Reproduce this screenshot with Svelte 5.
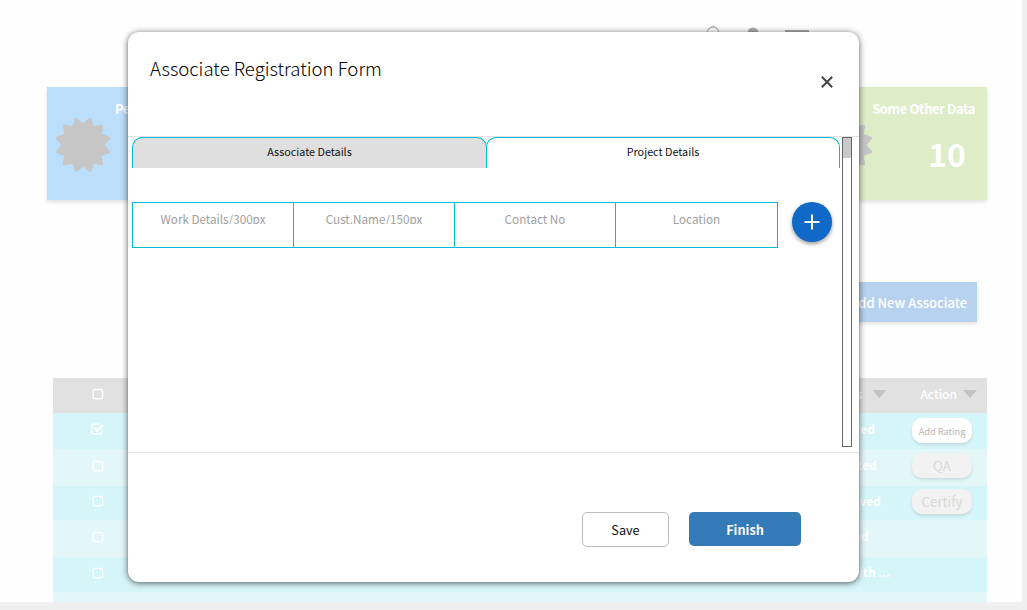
<script>
  const rows = [
    { h: 36, status: 'red', end: 112, checked: true, action: 'Add Rating', kind: 'rate' },
    { h: 37, status: 'ted', end: 110, action: 'QA', kind: 'off' },
    { h: 34, status: 'oved', end: 106, action: 'Certify', kind: 'off' },
    { h: 37, status: 'ed', end: 118 },
    { h: 35, status: 'With ...', end: 97 },
    { h: 10 }
  ];
  const columns = ['Work Details/300px', 'Cust.Name/150px', 'Contact No', 'Location'];

  const burst = Array.from({ length: 24 }, (_, i) => {
    const r = i % 2 ? 26.7 : 20;
    const a = (i * 15 * Math.PI) / 180;
    return `${(28 + r * Math.sin(a)).toFixed(2)},${(28 - r * Math.cos(a)).toFixed(2)}`;
  }).join(' ');
</script>

{#snippet star()}
  <svg class="star" viewBox="0 0 56 56"><polygon points={burst} /></svg>
{/snippet}

{#snippet box(checked)}
  <svg class="check" viewBox="0 0 14 12">
    {#if checked}
      <path class="frame" d="M10.800 7.500V9.200a1.500 1.500 0 0 1-1.500 1.500H2.300A1.500 1.500 0 0 1 .8 9.200V2.700a1.500 1.500 0 0 1 1.500-1.500H9" />
      <path d="M3.200 4.800 6.200 7.800 12.200 2" />
    {:else}
      <rect x="2.200" y="1.500" width="9.400" height="9.200" rx="1.600" />
    {/if}
  </svg>
{/snippet}

<div class="screen">
  <div class="page">
    <header>
      <svg viewBox="0 0 18 22" width="18" height="22"><path d="M3 13V8a6 6 0 0 1 12 0v5l2 3H1l2-3Z" fill="none" stroke="#bbb" stroke-width="1.3" /><path d="M6.800 2.200 9 0l2.200 2.200z" fill="#bbb" /></svg>
      <svg viewBox="0 0 18 22" width="18" height="22"><circle cx="9" cy="8" r="5.500" fill="#aaa" /><path d="M1 22c0-10 16-10 16 0z" fill="#aaa" /></svg>
      <svg viewBox="0 0 24 22" width="24" height="22"><path d="M0 6h24M0 12h24M0 18h24" stroke="#aaa" stroke-width="2" /></svg>
    </header>
    <section class="cards">
      <div class="card blue">{@render star()}<b>Pe</b></div>
      <div class="card green">
        {@render star()}
        <div class="figures"><b>Some Other Data</b><strong>10</strong></div>
      </div>
    </section>
    <button class="add">Add New Associate</button>
    <div class="table">
      <div class="row head">
        {@render box(false)}
        <div class="status"><span>s</span><i class="caret"></i></div>
        <div class="action"><span>Action</span><i class="caret"></i></div>
      </div>
      {#each rows as r}
        <div class="row" style="height: {r.h}px">
          {#if r.status}
            {@render box(r.checked)}
            <span class="state" style="padding-right: {r.end}px">{r.status}</span>
          {/if}
          {#if r.action}<span class="pill {r.kind}">{r.action}</span>{/if}
        </div>
      {/each}
    </div>
  </div>

  <div class="modal">
    <div class="top">
      <h1>Associate Registration Form</h1>
      <svg class="close" viewBox="0 0 12 12"><path d="M.8 .8 11.200 11.200M11.200 .8 .8 11.200" /></svg>
    </div>
    <div class="body">
      <div class="content">
        <div class="tabs">
          <div class="tab inactive">Associate Details</div>
          <div class="tab">Project Details</div>
        </div>
        <div class="entry">
          <div class="fields">
            {#each columns as c}<div class="field"><span>{c}</span></div>{/each}
          </div>
          <div class="plus"><svg viewBox="0 0 16 16"><path d="M8 .5v15M.5 8h15" /></svg></div>
        </div>
      </div>
      <div class="scroll"><div class="thumb"></div></div>
    </div>
    <div class="foot">
      <div class="btn save">Save</div>
      <div class="btn finish">Finish</div>
    </div>
  </div>
</div>

<style>
  :global(body) { margin: 0; overflow: hidden; }
  .screen, .screen * { box-sizing: border-box; }
  .screen { position: relative; width: 1027px; height: 610px; overflow: hidden; background: #efefef; font-family: 'Source Sans Pro', 'Noto Sans CJK SC', sans-serif; white-space: nowrap; }
  .page { width: 1022px; height: 602px; overflow: hidden; background: #fefefe; display: flex; flex-direction: column; }
  header { height: 87px; padding: 25px 213px 0 0; display: flex; justify-content: flex-end; }
  header svg:nth-child(1) { margin-right: 22px; }
  header svg:nth-child(2) { margin-right: 23px; }
  .cards { display: flex; justify-content: space-between; margin: 0 35px 0 47px; height: 113px; flex: none; }
  .card { display: flex; width: 178px; box-shadow: 0 2px 4px rgba(0, 0, 0, .12); color: #fff; }
  .blue { background: #bbdefb; padding-left: 8px; }
  .green { background: #dcedc8; padding-left: 8px; }
  .star { width: 56px; height: 56px; margin-top: 30px; fill: #c6c6c6; stroke: #c6c6c6; stroke-width: 2.600; stroke-linejoin: round; flex: none; }
  .card b { font-size: 13px; letter-spacing: -.4px; line-height: 20px; margin-top: 12px; }
  .blue b { margin-left: 4px; }
  .figures { display: flex; flex-direction: column; align-items: flex-end; width: 102px; }
  .figures strong { font-size: 32px; line-height: 40px; margin: 14px 9px 0 0; }
  .add { align-self: flex-end; margin: 82px 45px 0 0; height: 40px; width: 144px; padding: 2px 10px 0 0; border: 0; background: #b7d2ef; color: #fff; font: 500 13px/38px 'Source Sans Pro', 'Noto Sans CJK SC', sans-serif; text-align: right; box-shadow: 0 2px 4px rgba(0, 0, 0, .12); flex: none; }
  .table { margin: 56px 35px 0 53px; }
  .row { display: flex; align-items: center; overflow: hidden; padding: 0 15px 0 38px; background: #e3f7f9; color: #fff; font-size: 12px; font-weight: 700; }
  .row:nth-child(even) { background: #d6f5f9; }
  .row.head { height: 35px; padding-right: 10px; background: #e1e1e1; font-weight: 500; }
  .head span { line-height: 20px; margin-top: -4px; }
  .check { width: 14px; height: 12px; fill: none; stroke: #fff; stroke-width: 1.400; margin-top: -4px; flex: none; }
  .check path { stroke-width: 2.400; }
  .check .frame { stroke-width: 1.400; }
  .status, .action { display: flex; align-items: center; }
  .status { margin-left: auto; gap: 10px; margin-right: 34px; }
  .action { gap: 6px; }
  .caret { width: 14px; height: 8px; background: #c3c3c3; clip-path: polygon(0 0, 100% 0, 50% 100%); margin-top: -3px; }
  .state { margin-left: auto; line-height: 20px; margin-top: -5px; margin-right: -15px; }
  .pill { width: 60px; height: 25px; border-radius: 10px; text-align: center; font-weight: 400; flex: none; margin-top: -2px; box-shadow: 0 2px 3px rgba(0, 0, 0, .1); }
  .state + .pill { margin-left: -60px; }
  .rate { background: #fff; color: #b5b5b5; font-size: 9.200px; line-height: 26px; }
  .off { background: #f2f2f2; color: #d9d9d9; font-size: 13.300px; line-height: 26px; margin-top: -4px; }

  .modal { position: absolute; left: 128px; top: 32px; width: 731px; height: 550px; background: #fff; border-radius: 11px; box-shadow: 0 1px 6px rgba(0, 0, 0, .65); display: flex; flex-direction: column; color: #111; }
  .top { height: 105px; border-bottom: 1px solid #e3e3e3; padding: 21px 26px 0 22px; display: flex; justify-content: space-between; }
  h1 { margin: 0; font-size: 18.600px; line-height: 30px; font-weight: 300; color: #000; }
  .close { width: 12px; height: 12px; margin-top: 23px; stroke: #444; stroke-width: 2; }
  .body { height: 316px; border-bottom: 1px solid #e3e3e3; display: flex; padding-left: 4px; gap: 2px; }
  .content { width: 708px; }
  .tabs { display: flex; height: 31px; }
  .tab { flex: 1; border: 1px solid #00bcd4; border-bottom: 0; border-radius: 10px 10px 0 0; text-align: center; font-size: 10.800px; line-height: 27px; }
  .inactive { flex: 0 0 355px; background: #dfdfdf; }
  .tab + .tab { margin-left: -1px; }
  .entry { display: flex; margin-top: 34px; gap: 14px; }
  .fields { width: 646px; height: 46px; border: 1px solid #00bcd4; display: flex; }
  .field { width: 161px; border-right: 1px solid #00bcd4; text-align: center; font-size: 11.700px; color: #9e9e9e; }
  .field:last-child { border: 0; }
  .field span { display: block; height: 21px; line-height: 32px; overflow: hidden; }
  .plus { width: 40px; height: 40px; border-radius: 50%; background: #1068c9; box-shadow: 0 2px 4px rgba(0, 0, 0, .4); display: flex; align-items: center; justify-content: center; }
  .plus svg { width: 16px; height: 16px; stroke: #fff; stroke-width: 2; }
  .scroll { width: 10px; height: 310px; border: 1px solid #666; }
  .thumb { height: 20px; background: #c8c8c8; }
  .foot { display: flex; gap: 20px; padding: 59px 58px 0 0; justify-content: flex-end; }
  .btn { border-radius: 5px; text-align: center; font-size: 12.700px; }
  .save { width: 87px; height: 35px; line-height: 33px; border: 1px solid #bbb; }
  .finish { width: 112px; height: 34px; line-height: 35px; background: #337ab7; color: #fff; font-weight: 700; }
</style>
